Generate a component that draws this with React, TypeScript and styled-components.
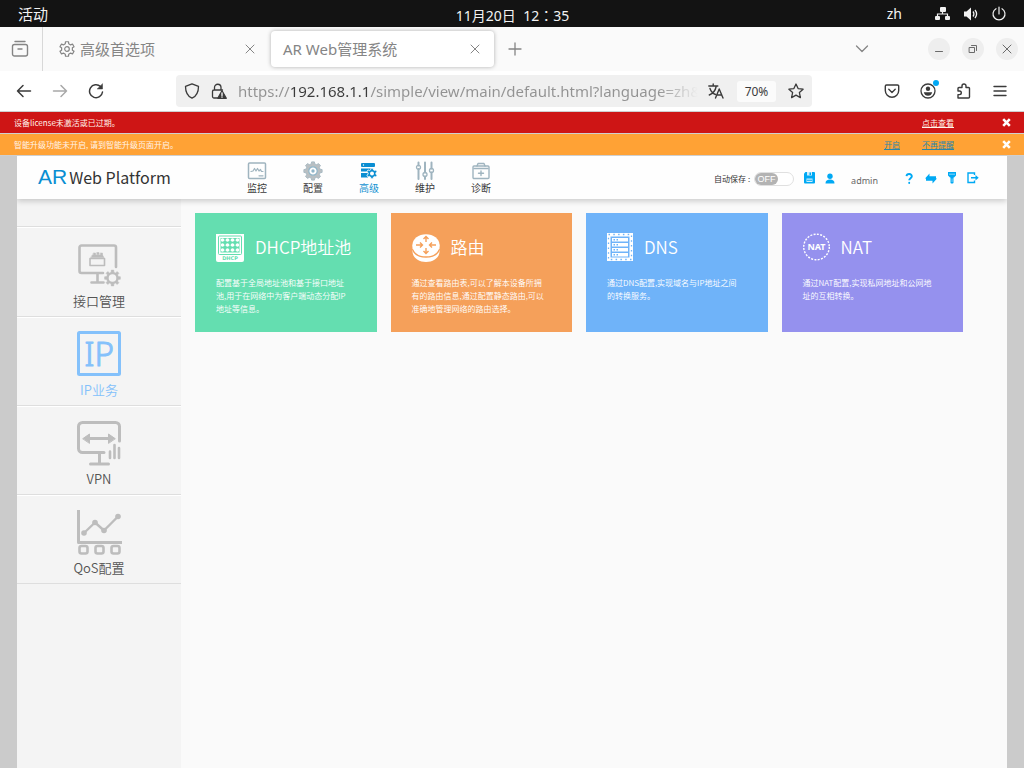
import React from "react";
import styled, { createGlobalStyle } from "styled-components";

const uiFont = '"Noto Sans", "Noto Sans CJK SC", sans-serif';
const pageFont = '"Noto Sans CJK SC", "Noto Sans", sans-serif';

const GlobalStyle = createGlobalStyle`
  *, *::before, *::after { box-sizing: border-box; }
  html, body, #root { height: 100%; }
  body { margin: 0; background: #fafafa; font-family: ${uiFont}; }
  button { border: 0; padding: 0; background: none; font: inherit; color: inherit; cursor: pointer; }
  svg { display: block; flex: none; }
`;

const Desktop = styled.div`
  min-height: 100%;
  display: flex;
  flex-direction: column;
`;

/* ---------- desktop top bar ---------- */

const TopBar = styled.header`
  display: grid;
  grid-template-columns: 1fr auto 1fr;
  align-items: center;
  height: 27px;
  padding: 0 17px 0 18px;
  background: #131313;
  color: #f2f2f2;
  font-size: 14px;
  line-height: 20px;
`;

const Activities = styled.button`
  justify-self: start;
  font-size: 15px;
`;

const Clock = styled.time`
  padding-top: 4px;
  font-family: "Noto Sans", "Noto Sans CJK TC", sans-serif;
  white-space: pre;
`;

const Status = styled.div`
  justify-self: end;
  display: flex;
  align-items: center;
  gap: 12px;
`;

const Language = styled.span`
  margin-right: 21px;
`;

/* ---------- browser chrome ---------- */

const TabStrip = styled.div`
  display: flex;
  align-items: center;
  height: 44px;
  background: #fafafa;
  color: #858585;
`;

const ViewButton = styled.button`
  display: flex;
  align-items: center;
  height: 44px;
  width: 43px;
  margin-right: 5px;
  padding-left: 11px;
  border-right: 1px solid #d8d8d8;
`;

const Tab = styled.div<{ $active?: boolean }>`
  display: flex;
  align-items: center;
  gap: 5px;
  width: 223px;
  height: 36px;
  padding: 0 ${(p) => (p.$active ? 14 : 16)}px 0 ${(p) => (p.$active ? 12 : 11)}px;
  border-radius: 4px;
  font-size: 15px;
  line-height: 20px;
  background: ${(p) => (p.$active ? "#ffffff" : "transparent")};
  box-shadow: ${(p) => (p.$active ? "0 0 4px rgba(0, 0, 0, 0.3)" : "none")};
`;

const TabTitle = styled.span`
  flex: 1;
  white-space: nowrap;
`;

const NewTab = styled.button`
  margin-left: 14px;
`;

const WindowTools = styled.div`
  display: flex;
  align-items: center;
  gap: 12px;
  margin-left: auto;
  padding-right: 6px;
`;

const TabList = styled.button`
  margin-right: 47px;
`;

const Round = styled.button`
  display: grid;
  place-items: center;
  width: 22px;
  height: 22px;
  border-radius: 50%;
  background: #eeeeee;
  color: #6a6a6a;
`;

const Toolbar = styled.div`
  display: flex;
  align-items: center;
  height: 41px;
  padding: 0 15px;
  background: #ffffff;
  border-bottom: 1px solid #cfcfcf;
  color: #3b3b3b;
`;

const ToolGroup = styled.div`
  display: flex;
  gap: 18px;
`;

const ToolButton = styled.button<{ $dim?: boolean }>`
  position: relative;
  display: grid;
  place-items: center;
  width: 18px;
  height: 18px;
  color: ${(p) => (p.$dim ? "#a8a8a8" : "inherit")};
`;

const Dot = styled.span`
  position: absolute;
  top: -2px;
  right: -2px;
  width: 6px;
  height: 6px;
  border-radius: 50%;
  background: #00a8f4;
`;

const AddressBar = styled.div`
  flex: 1;
  display: flex;
  align-items: center;
  height: 32px;
  margin: 0 71px;
  padding: 0 7px;
  gap: 9px;
  border-radius: 4px;
  background: #f0f0f0;
`;

const Address = styled.input`
  flex: 1;
  min-width: 0;
  height: 32px;
  padding: 0 0 0 1px;
  border: 0;
  outline: 0;
  font-family: ${uiFont};
  font-size: 15px;
  color: #929292;
  -webkit-text-fill-color: transparent;
  background: linear-gradient(
    to right,
    #929292 0 53px,
    #3b3b3b 53px 133px,
    #929292 133px calc(100% - 40px),
    #f0f0f0 100%
  );
  -webkit-background-clip: text;
  background-clip: text;
`;

const ZoomLevel = styled.button`
  width: 39px;
  height: 21px;
  margin: 0 2px 0 3px;
  border-radius: 3px;
  background: #fbfbfb;
  font-size: 12px;
`;

/* ---------- notices ---------- */

const Notice = styled.div<{ $tone: string }>`
  display: flex;
  align-items: center;
  height: 22px;
  padding: 0 13px 0 14px;
  border-bottom: 1px solid #cfcfcf;
  background: ${(p) => p.$tone};
  color: #fff4ea;
  font-family: ${pageFont};
  font-size: 8px;
  line-height: 12px;
`;

const NoticeText = styled.span`
  flex: 1;
`;

const NoticeLink = styled.a<{ $blue?: boolean }>`
  margin-left: 22px;
  color: ${(p) => (p.$blue ? "#2a86a8" : "#fff4ea")};
`;

const NoticeClose = styled.button`
  margin-left: 48px;
`;

/* ---------- web page ---------- */

const Page = styled.div`
  flex: 1;
  display: flex;
  flex-direction: column;
  padding: 0 17px;
  background: #cbcbcb;
  font-family: ${pageFont};
`;

const PageHeader = styled.header`
  position: relative;
  display: flex;
  height: 43px;
  padding-right: 28px;
  background: #fefefe;
  box-shadow: 0 2px 6px rgba(0, 0, 0, 0.2);
  clip-path: inset(0 0 -12px 0);
`;

const Brand = styled.div`
  display: flex;
  align-items: baseline;
  gap: 2px;
  width: 212px;
  padding: 3px 0 0 21px;
  color: #333333;
  font-size: 16px;
  line-height: 36px;
`;

const BrandMark = styled.span`
  color: #0a8ed2;
  font-family: "Liberation Sans", sans-serif;
  font-size: 21px;
`;

const Nav = styled.nav`
  display: flex;
`;

const NavItem = styled.a<{ $active?: boolean }>`
  display: flex;
  flex-direction: column;
  align-items: center;
  width: 56px;
  padding-top: 5px;
  color: ${(p) => (p.$active ? "#1492d2" : "#3a3a3a")};
  font-size: 10px;
  line-height: 14px;
  text-decoration: none;
`;

const NavIcon = styled.span<{ $active?: boolean }>`
  display: grid;
  place-items: center;
  height: 20px;
  color: ${(p) => (p.$active ? "#0a8ed2" : "#9fb4bf")};
`;

const Account = styled.div`
  display: flex;
  align-items: center;
  gap: 10px;
  margin-left: auto;
  padding-top: 1px;
  color: #00a9f4;
`;

const AutoSave = styled.label`
  display: flex;
  align-items: center;
  gap: 4px;
  padding-top: 2px;
  color: #333333;
  font-size: 8px;
  line-height: 14px;
`;

const Toggle = styled.input`
  appearance: none;
  display: flex;
  align-items: center;
  width: 40px;
  height: 14px;
  margin: 0;
  padding: 0;
  border: 1px solid #e0e0e0;
  border-radius: 7px;
  background: #ffffff;

  &::before {
    content: "OFF";
    width: 23px;
    height: 12px;
    border-radius: 6px;
    background: #b3b3b3;
    color: #ffffff;
    font-family: "Liberation Sans", sans-serif;
    font-size: 9px;
    line-height: 12px;
    text-align: center;
  }
`;

const UserName = styled.span`
  margin: 0 16px 0 6px;
  padding-top: 4px;
  color: #666666;
  font-family: "Noto Sans", sans-serif;
  font-size: 9px;
`;

const Body = styled.div`
  flex: 1;
  display: flex;
  background: #fafafa;
`;

const Sidebar = styled.aside`
  width: 164px;
  flex: none;
  padding-top: 27px;
  background: #f4f4f4;
`;

const SideItem = styled.a<{ $active?: boolean }>`
  display: flex;
  flex-direction: column;
  align-items: center;
  height: 89px;
  padding-top: 14px;
  border-top: 1px solid #dedede;
  box-shadow: inset 0 1px 0 #ffffff;
  color: ${(p) => (p.$active ? "#84c1fb" : "#555555")};
  font-size: 13px;
  font-weight: 350;
  line-height: 20px;
  text-decoration: none;

  &:first-child {
    height: 90px;
    padding-top: 15px;
  }

  &:last-child {
    height: 90px;
    border-bottom: 1px solid #dedede;
  }
`;

const SideIcon = styled.span<{ $active?: boolean }>`
  display: block;
  height: 49px;
  color: ${(p) => (p.$active ? "#84c1fb" : "#bdbdbd")};
`;

const Cards = styled.main`
  flex: 1;
  display: grid;
  grid-template-columns: repeat(4, 1fr);
  align-content: start;
  gap: 14px;
  padding: 14px 44px 14px 14px;
`;

const Card = styled.a<{ $tone: string }>`
  min-height: 119px;
  padding: 20px 21px 14px;
  background: ${(p) => p.$tone};
  color: #ffffff;
  text-decoration: none;
`;

const CardHead = styled.div`
  display: flex;
  align-items: flex-start;
  gap: 11px;
  height: 29px;
`;

const CardTitle = styled.h2`
  margin: 0;
  font-size: 17px;
  font-weight: 350;
  line-height: 27px;
`;

const CardText = styled.p`
  max-width: 135px;
  margin: 14px 0 0;
  font-size: 8px;
  font-weight: 350;
  line-height: 13px;
`;

/* ---------- drawings ---------- */

type StrokeProps = { size?: number; box?: number; width?: number; children: React.ReactNode };

const Line = ({ size = 16, box = 16, width = 1, children }: StrokeProps) => (
  <svg
    width={size}
    height={size}
    viewBox={`0 0 ${box} ${box}`}
    fill="none"
    stroke="currentColor"
    strokeWidth={width}
    strokeLinecap="round"
    strokeLinejoin="round"
    aria-hidden="true"
  >
    {children}
  </svg>
);

const gearPath = (cx: number, cy: number, outer: number, inner: number, teeth: number) => {
  const step = (Math.PI * 2) / teeth;
  const point = (r: number, a: number) =>
    `${(cx + r * Math.cos(a)).toFixed(2)} ${(cy + r * Math.sin(a)).toFixed(2)}`;
  let d = "";
  for (let i = 0; i < teeth; i++) {
    const a = i * step - Math.PI / 2;
    d += `${i ? "L" : "M"}${point(inner, a - step * 0.3)}L${point(outer, a - step * 0.2)}`;
    d += `L${point(outer, a + step * 0.2)}L${point(inner, a + step * 0.3)}`;
  }
  return `${d}Z`;
};

const Cross = ({ size = 10 }: { size?: number }) => (
  <Line size={size} box={10}>
    <path d="M1 1l8 8M9 1L1 9" />
  </Line>
);

const NoticeCross = () => (
  <svg width="9" height="9" viewBox="0 0 9 9" stroke="#fff" strokeWidth="2.6" aria-hidden="true">
    <path d="M1.2 1.2l6.6 6.6M7.8 1.2L1.2 7.8" />
  </svg>
);

const NetworkIcon = () => (
  <svg width="16" height="16" viewBox="0 0 16 16" fill="#f2f2f2" aria-hidden="true">
    <rect x="5" y="1" width="6" height="5" rx="1" />
    <rect x="0" y="10" width="5" height="4" rx="1" />
    <rect x="10" y="10" width="5" height="4" rx="1" />
    <path d="M7.5 5v3M2.5 10V8h10v2" fill="none" stroke="#f2f2f2" strokeWidth="1.2" />
  </svg>
);

const VolumeIcon = () => (
  <svg width="16" height="16" viewBox="0 0 16 16" fill="#f2f2f2" aria-hidden="true">
    <path d="M1 5.500h2.500L8 1.500v13l-4.500-4H1z" />
    <path d="M10 5.500q1.800 2.500 0 5M12 4q3.200 4 0 8" fill="none" stroke="#f2f2f2" strokeWidth="1.300" />
  </svg>
);

const PowerIcon = () => (
  <Line width={1.2}>
    <path d="M8 1v7M5 2.700a6 6 0 1 0 6 0" />
  </Line>
);

const ViewIcon = () => (
  <Line size={18} box={18} width={1.4}>
    <rect x="1.500" y="4.500" width="15" height="11.500" rx="2" />
    <path d="M4 1.500h10M7 9h4" />
  </Line>
);

const PrefsIcon = () => (
  <Line size={16} width={1.2}>
    <path d={gearPath(8, 8, 7.4, 5.5, 6)} />
    <circle cx="8" cy="8" r="2.300" />
  </Line>
);

const BackIcon = () => (
  <Line width={1.5}>
    <path d="M14.500 8H1.500M7 2.500L1.500 8 7 13.500" />
  </Line>
);

const ForwardIcon = () => (
  <Line width={1.5}>
    <path d="M1.500 8h13M9 2.500L14.500 8 9 13.500" />
  </Line>
);

const ReloadIcon = () => (
  <Line width={1.5}>
    <path d="M14.500 9A6.500 6.500 0 1 1 12.500 3.500" />
    <path d="M14.500 1v5h-5z" fill="currentColor" strokeWidth="0.500" />
  </Line>
);

const ShieldIcon = () => (
  <Line width={1.3}>
    <path d="M8 .8l6.500 2.600c0 5.600-2 9.700-6.500 11.800C3.500 13.100 1.500 9 1.500 3.400z" />
  </Line>
);

const LockIcon = () => (
  <Line width={1.3}>
    <path d="M6.500 15H3a1.500 1.500 0 0 1-1.500-1.500v-5A1.500 1.500 0 0 1 3 7h8.500M3.500 7V4.500a3.200 3.200 0 0 1 6.500 0V7" />
    <path d="M11 7.700l4.300 7.600H6.800z" fill="currentColor" />
    <path d="M11 10v2.500M11 14v.2" stroke="#fff" />
  </Line>
);

const TranslateIcon = () => (
  <Line width={1.4}>
    <path d="M.8 3h9M5.200 1v2M2 5.500c1 3 3 5 5.500 6M8.300 3c-.8 4-3 7.500-7 9" />
    <path d="M7.500 15L11.200 6l3.800 9M8.800 12h5" />
  </Line>
);

const StarIcon = () => (
  <Line width={1.3}>
    <path d="M8 1l2.100 4.600 5 .6-3.700 3.400 1 5L8 12.100l-4.400 2.500 1-5L.9 6.200l5-.6z" />
  </Line>
);

const PocketIcon = () => (
  <Line width={1.4}>
    <path d="M2.500 2h11A1.200 1.200 0 0 1 14.700 3.200V7.500a6.700 6.700 0 0 1-13.400 0V3.200A1.200 1.200 0 0 1 2.500 2z" />
    <path d="M4.800 6.300L8 9.400l3.200-3.100" />
  </Line>
);

const ProfileIcon = () => (
  <Line width={1.3}>
    <circle cx="8" cy="8" r="7" />
    <circle cx="8" cy="5.800" r="2.200" fill="currentColor" stroke="none" />
    <path d="M3.800 9.300h8.400q-.8 3.500-4.200 3.500t-4.200-3.500z" fill="currentColor" stroke="none" />
  </Line>
);

const PuzzleIcon = () => (
  <Line width={1.4}>
    <path d="M2 15h10.500a1 1 0 0 0 1-1V5.500a1 1 0 0 0-1-1H10V3a2 2 0 0 0-4 0v1.500H3a1 1 0 0 0-1 1V8h1.500a1.800 1.800 0 0 1 0 3.600H2z" />
  </Line>
);

const MenuIcon = () => (
  <Line width={1.4}>
    <path d="M2 3.500h12M2 8h12M2 12.500h12" />
  </Line>
);

const MonitorNav = () => (
  <Line size={20} box={20} width={1.5}>
    <rect x="1.500" y="2" width="17" height="15.500" rx="1" />
    <path d="M4 10.500l2-.5 1.500-2.500 1.500 2.500 1.500-2.500 1.500 2.500 1.500-1.500 1 2H16" strokeWidth="1.200" />
    <path d="M12 14.800h4" strokeWidth="1.200" />
  </Line>
);

const ConfigNav = () => (
  <svg width="20" height="20" viewBox="0 0 20 20" aria-hidden="true">
    <path d={gearPath(10, 10, 9.2, 7.3, 8)} fill="#b9bfc2" stroke="#a9bac3" strokeLinejoin="round" />
    <circle cx="10" cy="10" r="4.200" fill="#fefefe" stroke="#8fb5c8" strokeWidth="1.200" />
    <circle cx="10" cy="10" r="1.700" fill="#8fb5c8" />
  </svg>
);

const AdvancedNav = () => (
  <svg width="18" height="20" viewBox="0 0 18 20" fill="currentColor" aria-hidden="true">
    <rect x="1" y="2" width="14" height="4" rx="1" />
    <path d="M1 7.500h11l-3.500 3H1zM1 12h7v4.500H1z" />
    <circle cx="3.500" cy="4" r=".7" fill="#fff" />
    <path d={gearPath(12, 12.5, 5.4, 4, 6)} stroke="#fefefe" strokeWidth=".8" />
    <circle cx="12" cy="12.500" r="2" fill="#fefefe" />
  </svg>
);

const MaintainNav = () => (
  <Line size={20} box={20} width={1.3}>
    <path d="M3.500 1.500v3M3.500 8v10M10 1.500v10M10 15.500v2.500M16.500 1.500v6M16.500 11.500V18" strokeWidth="2" />
    <circle cx="3.500" cy="6.300" r="2" />
    <circle cx="10" cy="13.500" r="2" />
    <circle cx="16.500" cy="9.500" r="2" />
  </Line>
);

const DiagnoseNav = () => (
  <Line size={20} box={20} width={1.4}>
    <rect x="2" y="5" width="16" height="12.500" rx="1" />
    <path d="M6 5l1-2.500h6l1 2.500M3 7.500h14M10 10v4.500M7.500 12.200h5" />
  </Line>
);

const SaveIcon = () => (
  <svg width="11" height="12" viewBox="0 0 11 12" fill="currentColor" aria-hidden="true">
    <path d="M0 1.500L1.500 0H10q1 0 1 1v9.500q0 1-1 1H1q-1 0-1-1z" />
    <path d="M3 0h5v3.500H3zM2.500 6.500h6v3.500h-6z" fill="#fff" opacity=".8" />
    <path d="M5.500 .5h1.500v2.500H5.500zM3 7.800h5v1H3z" />
  </svg>
);

const UserIcon = () => (
  <svg width="10" height="11" viewBox="0 0 10 11" fill="currentColor" aria-hidden="true">
    <circle cx="5" cy="3.200" r="2.700" />
    <path d="M.5 10.500c0-3 1.800-4 4.500-4s4.500 1 4.500 4z" />
  </svg>
);

const HelpIcon = () => (
  <Line size={11} box={11} width={1.9}>
    <path d="M2.500 3.200c.3-3 5.500-2.800 5.300.2C7.700 5.200 5.200 5.200 5.200 7.300" strokeLinecap="butt" />
    <path d="M5.200 9.800v.2" />
  </Line>
);

const SwapIcon = () => (
  <svg width="12" height="11" viewBox="0 0 12 11" fill="currentColor" aria-hidden="true">
    <path d="M0 5.600L4.500 .5v2.700H11v2.400zM12 5.400L7.500 10.500V7.800H1V5.400z" />
  </svg>
);

const ToolIcon = () => (
  <svg width="10" height="12" viewBox="0 0 10 12" fill="currentColor" aria-hidden="true">
    <path d="M1 0h8v3.500L7 5.500H3L1 3.500zM3.500 5.500h3V11q-1.500 1-3 0z" />
    <path d="M2 1.800h6v.8H2zM4.700 6.500h.7V10h-.7z" fill="#b5e6fb" />
  </svg>
);

const ExitIcon = () => (
  <svg width="12" height="12" viewBox="0 0 12 12" fill="none" stroke="currentColor" strokeWidth="1.400" aria-hidden="true">
    <path d="M7.500 3V1H1v9.500h6.500v-2M4 5.800h6" />
    <path d="M8.500 3l3.200 2.800-3.200 2.800z" fill="currentColor" stroke="none" />
  </svg>
);

const SideFrame = ({ children }: { children: React.ReactNode }) => (
  <svg
    width="46"
    height="46"
    viewBox="0 0 46 46"
    fill="none"
    stroke="currentColor"
    strokeWidth="3"
    strokeLinecap="round"
    strokeLinejoin="round"
    aria-hidden="true"
  >
    {children}
  </svg>
);

const InterfaceIcon = () => (
  <SideFrame>
    <path d="M40 25V5.500a2 2 0 0 0-2-2H5.500a2 2 0 0 0-2 2V29a2 2 0 0 0 2 2H27M21.500 31v9M15.500 40.500h12" strokeWidth="2.600" />
    <path d="M14 16.500h14.500v7H14z" strokeWidth="1.600" />
    <path d="M15 15.500h13l-1.500-2.500h-10zM17.500 11h2v2h-2zM21 10.500h2v2h-2zM24.500 11h2v2h-2z" fill="currentColor" strokeWidth="0.500" />
    <path d={gearPath(36.5, 36, 8, 6, 8)} fill="currentColor" strokeWidth="0.500" />
    <circle cx="36.500" cy="36" r="3.800" fill="#f4f4f4" stroke="none" />
  </SideFrame>
);

const IpIcon = () => (
  <SideFrame>
    <rect x="2.500" y="1.500" width="41" height="42" rx="1" />
    <text x="23" y="35" textAnchor="middle" fontFamily="Noto Sans" fontSize="33" fill="currentColor" strokeWidth="1">
      IP
    </text>
  </SideFrame>
);

const VpnIcon = () => (
  <SideFrame>
    <path d="M43.500 21V6.500a4 4 0 0 0-4-4h-33a4 4 0 0 0-4 4v22a4 4 0 0 0 4 4H28M23.500 32.500V43M14.500 44h18" />
    <path d="M12 18.500h23" />
    <path d="M7 18.500l6.500-4.500v9zM39 18.500L32.500 14v9z" fill="currentColor" strokeWidth="1" />
    <path d="M34 31.500v6.500M38.500 25v13M43 28v10" strokeWidth="2.600" />
  </SideFrame>
);

const QosIcon = () => (
  <SideFrame>
    <path d="M2.500 2.500v31h42" strokeLinecap="square" />
    <path d="M8 24l11-10.500 9 8L42 7.500" strokeWidth="2.400" />
    <g fill="currentColor" stroke="none">
      <circle cx="8" cy="24" r="2.800" />
      <circle cx="19" cy="13.500" r="2.800" />
      <circle cx="28" cy="21.500" r="2.800" />
      <circle cx="42" cy="7.500" r="2.800" />
    </g>
    <rect x="3.500" y="37" width="8" height="7.500" rx="2" strokeWidth="2.600" />
    <rect x="19.500" y="37" width="8" height="7.500" rx="2" strokeWidth="2.600" />
    <rect x="35.500" y="37" width="8" height="7.500" rx="2" strokeWidth="2.600" />
  </SideFrame>
);

const DhcpIcon = () => (
  <svg width="28" height="29" viewBox="0 0 28 29" aria-hidden="true">
    <path d="M0 1h28v26q0 2-2 2H2q-2 0-2-2z" fill="#fff" />
    <rect x="2.500" y="3" width="23" height="18.500" rx="1" fill="none" stroke="#64deb0" />
    <path d="M4.500 5h19v14.500h-19z" fill="#64deb0" />
    <g fill="#fff">
      {[6.5, 11.5, 16.5, 21.5].map((x) =>
        [7, 12, 17].map((y) => <circle key={`${x}-${y}`} cx={x} cy={y} r="1.700" />)
      )}
      <path d="M5 6.800h18v.6H5zM5 11.800h18v.6H5zM5 16.800h18v.6H5z" opacity=".6" />
    </g>
    <text x="14" y="27" textAnchor="middle" fontFamily="DejaVu Sans" fontWeight="700" fontSize="5" fill="#64deb0">
      DHCP
    </text>
  </svg>
);

const RouterIcon = () => (
  <svg width="28" height="29" viewBox="0 0 28 29" aria-hidden="true">
    <path d="M.5 11.500v7C.5 24.500 6.500 29 14 29s13.500-4.500 13.500-10.500v-7z" fill="#fff" />
    <path d="M.5 16C2 21.500 7.500 24 14 24s12-2.500 13.500-8" fill="none" stroke="#f5a05a" strokeWidth="1.300" />
    <ellipse cx="14" cy="12" rx="13.500" ry="10.800" fill="#fff" />
    <g stroke="#f5a05a" strokeWidth="1.400" fill="none">
      <path d="M14 3.500v5.500M11.500 6L14 3.500 16.500 6M14 20.500V15M11.500 18l2.500 2.500 2.500-2.500M4 12h6M8 9.500l2.500 2.500L8 14.500M24 12h-6M20 9.500L17.500 12l2.500 2.500" />
    </g>
  </svg>
);

const DnsIcon = () => (
  <svg width="26" height="28" viewBox="0 0 26 28" aria-hidden="true">
    <path d="M0 0h26v28H0z" fill="#fff" />
    <path d="M1.500 1.500h23v25h-23z" fill="none" stroke="#6fb3f9" strokeWidth="1.300" strokeDasharray="1.500 3.300" />
    <path d="M3.500 3.500h19v21h-19z" fill="#6fb3f9" />
    {[5, 10, 15, 20].map((y) => (
      <g key={y}>
        <rect x="5" y={y} width="16" height="3.500" fill="#fff" />
        <path d={`M6.500 ${y + 1}h1.500v1.500H6.500zM9.500 ${y + 1}H11v1.500H9.500z`} fill="#6fb3f9" />
      </g>
    ))}
  </svg>
);

const NatIcon = () => (
  <svg width="27" height="28" viewBox="0 0 27 28" aria-hidden="true">
    <circle cx="13.500" cy="14" r="12.800" fill="none" stroke="#fff" strokeWidth="1.400" strokeDasharray="2 1.351" />
    <text x="13.500" y="17" textAnchor="middle" fontFamily="Noto Sans" fontWeight="700" fontSize="9" fill="#fff">
      NAT
    </text>
  </svg>
);

/* ---------- data ---------- */

const navItems = [
  { label: "监控", icon: <MonitorNav /> },
  { label: "配置", icon: <ConfigNav /> },
  { label: "高级", icon: <AdvancedNav />, active: true },
  { label: "维护", icon: <MaintainNav /> },
  { label: "诊断", icon: <DiagnoseNav /> },
];

const sideItems = [
  { label: "接口管理", icon: <InterfaceIcon /> },
  { label: "IP业务", icon: <IpIcon />, active: true },
  { label: "VPN", icon: <VpnIcon /> },
  { label: "QoS配置", icon: <QosIcon /> },
];

const cards = [
  {
    title: "DHCP地址池",
    tone: "#64deb0",
    icon: <DhcpIcon />,
    text: "配置基于全局地址池和基于接口地址池,用于在网络中为客户端动态分配IP地址等信息。",
  },
  {
    title: "路由",
    tone: "#f5a05a",
    icon: <RouterIcon />,
    text: "通过查看路由表,可以了解本设备所拥有的路由信息,通过配置静态路由,可以准确地管理网络的路由选择。",
  },
  {
    title: "DNS",
    tone: "#6fb3f9",
    icon: <DnsIcon />,
    text: "通过DNS配置,实现域名与IP地址之间的转换服务。",
  },
  {
    title: "NAT",
    tone: "#9591ee",
    icon: <NatIcon />,
    text: "通过NAT配置,实现私网地址和公网地址的互相转换。",
  },
];

export default function App() {
  return (
    <Desktop lang="zh-CN">
      <GlobalStyle />
      <TopBar>
        <Activities>活动</Activities>
        <Clock lang="zh-TW">11月20日  12：35</Clock>
        <Status>
          <Language>zh</Language>
          <NetworkIcon />
          <VolumeIcon />
          <PowerIcon />
        </Status>
      </TopBar>

      <TabStrip>
        <ViewButton aria-label="Firefox View">
          <ViewIcon />
        </ViewButton>
        <Tab>
          <PrefsIcon />
          <TabTitle>高级首选项</TabTitle>
          <button aria-label="关闭标签页">
            <Cross />
          </button>
        </Tab>
        <Tab $active>
          <TabTitle>AR Web管理系统</TabTitle>
          <button aria-label="关闭标签页">
            <Cross />
          </button>
        </Tab>
        <NewTab aria-label="新建标签页">
          <Line size={14} box={14} width={1.3}>
            <path d="M7 1v12M1 7h12" />
          </Line>
        </NewTab>
        <WindowTools>
          <TabList aria-label="列出所有标签页">
            <Line size={14} box={14} width={1.3}>
              <path d="M1.500 4L7 9.500 12.500 4" />
            </Line>
          </TabList>
          <Round aria-label="最小化">
            <Line size={10} box={10}>
              <path d="M1.500 7.500h7" />
            </Line>
          </Round>
          <Round aria-label="还原">
            <Line size={10} box={10}>
              <path d="M1.500 3.500h5v5h-5zM3.500 1.500h5v5" />
            </Line>
          </Round>
          <Round aria-label="关闭">
            <Cross size={10} />
          </Round>
        </WindowTools>
      </TabStrip>

      <Toolbar>
        <ToolGroup>
          <ToolButton aria-label="后退">
            <BackIcon />
          </ToolButton>
          <ToolButton aria-label="前进" $dim>
            <ForwardIcon />
          </ToolButton>
          <ToolButton aria-label="刷新">
            <ReloadIcon />
          </ToolButton>
        </ToolGroup>
        <AddressBar>
          <ToolButton aria-label="跟踪保护">
            <ShieldIcon />
          </ToolButton>
          <ToolButton aria-label="连接不安全">
            <LockIcon />
          </ToolButton>
          <Address
            aria-label="地址"
            defaultValue="https://192.168.1.1/simple/view/main/default.html?language=zh&"
          />
          <ToolButton aria-label="翻译此页面">
            <TranslateIcon />
          </ToolButton>
          <ZoomLevel>70%</ZoomLevel>
          <ToolButton aria-label="添加书签">
            <StarIcon />
          </ToolButton>
        </AddressBar>
        <ToolGroup>
          <ToolButton aria-label="Pocket">
            <PocketIcon />
          </ToolButton>
          <ToolButton aria-label="账户">
            <ProfileIcon />
            <Dot />
          </ToolButton>
          <ToolButton aria-label="扩展">
            <PuzzleIcon />
          </ToolButton>
          <ToolButton aria-label="菜单">
            <MenuIcon />
          </ToolButton>
        </ToolGroup>
      </Toolbar>

      <Notice $tone="#ce1515">
        <NoticeText>设备license未激活或已过期。</NoticeText>
        <NoticeLink href="#license">点击查看</NoticeLink>
        <NoticeClose aria-label="关闭提示">
          <NoticeCross />
        </NoticeClose>
      </Notice>
      <Notice $tone="#ffa235">
        <NoticeText>智能升级功能未开启, 请到智能升级页面开启。</NoticeText>
        <NoticeLink href="#enable" $blue>
          开启
        </NoticeLink>
        <NoticeLink href="#dismiss" $blue>
          不再提醒
        </NoticeLink>
        <NoticeClose aria-label="关闭提示">
          <NoticeCross />
        </NoticeClose>
      </Notice>

      <Page>
        <PageHeader>
          <Brand>
            <BrandMark>AR</BrandMark>
            <span>Web Platform</span>
          </Brand>
          <Nav>
            {navItems.map((item) => (
              <NavItem key={item.label} href="#nav" $active={item.active}>
                <NavIcon $active={item.active}>{item.icon}</NavIcon>
                {item.label}
              </NavItem>
            ))}
          </Nav>
          <Account>
            <AutoSave>
              自动保存 :
              <Toggle type="checkbox" />
            </AutoSave>
            <button aria-label="保存">
              <SaveIcon />
            </button>
            <UserIcon />
            <UserName>admin</UserName>
            <button aria-label="帮助">
              <HelpIcon />
            </button>
            <button aria-label="切换">
              <SwapIcon />
            </button>
            <button aria-label="工具">
              <ToolIcon />
            </button>
            <button aria-label="退出">
              <ExitIcon />
            </button>
          </Account>
        </PageHeader>
        <Body>
          <Sidebar>
            {sideItems.map((item) => (
              <SideItem key={item.label} href="#side" $active={item.active}>
                <SideIcon $active={item.active}>{item.icon}</SideIcon>
                {item.label}
              </SideItem>
            ))}
          </Sidebar>
          <Cards>
            {cards.map((card) => (
              <Card key={card.title} href="#card" $tone={card.tone}>
                <CardHead>
                  {card.icon}
                  <CardTitle>{card.title}</CardTitle>
                </CardHead>
                <CardText>{card.text}</CardText>
              </Card>
            ))}
          </Cards>
        </Body>
      </Page>
    </Desktop>
  );
}
